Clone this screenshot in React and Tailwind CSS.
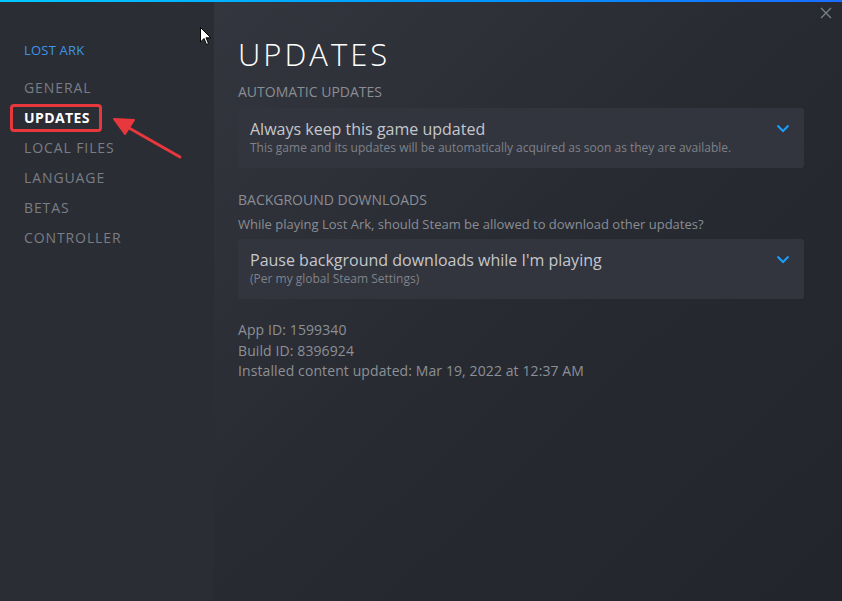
import React from "react";

const font = { fontFamily: '"Open Sans", "Noto Sans", Arial, sans-serif' };

function Chevron() {
  return (
    <svg width="14" height="9" viewBox="0 0 14 9" className="shrink-0">
      <path d="M1.5 1.5 L7 7 L12.5 1.5" fill="none" stroke="#1a9fff" strokeWidth="2" />
    </svg>
  );
}

function Dropdown({ title, sub }) {
  return (
    <div className="flex items-start justify-between rounded-[3px] bg-[#32353d] pl-3 pr-[14px] h-[60px] pt-[12px]">
      <div className="flex flex-col">
        <div className="text-[16px] leading-[19px] text-[#c5c7cc]">{title}</div>
        <div className="mt-[1px] text-[12px] leading-[15px] text-[#7f828a]">{sub}</div>
      </div>
      <div className="pt-[4px]">
        <Chevron />
      </div>
    </div>
  );
}

export default function App() {
  const nav = ["GENERAL", "UPDATES", "LOCAL FILES", "LANGUAGE", "BETAS", "CONTROLLER"];
  return (
    <div className="relative w-[842px] h-[601px] overflow-hidden bg-[#2a2d34]" style={font}>
      <div className="absolute left-0 top-0 w-full h-[2px] bg-gradient-to-r from-[#00c8ff] to-[#1a6cff]" />
      <div className="flex h-full">
        <div className="w-[214px] shrink-0 bg-[#2a2d34] pl-6 pt-[41px]">
          <div className="text-[13px] leading-[18px] text-[#3e95e8] tracking-[0.2px]">LOST ARK</div>
          <div className="mt-[14px] flex flex-col">
            {nav.map((n) => (
              <div
                key={n}
                className={
                  "h-[30px] leading-[30px] text-[14px] " +
                  (n === "UPDATES" ? "text-white font-bold tracking-[0.4px]" : "text-[#7a7d84] tracking-[0.9px]")
                }
              >
                {n}
              </div>
            ))}
          </div>
        </div>
        <div className="flex-1 bg-gradient-to-br from-[#33363e] via-[#272a31] to-[#22252c] pl-6 pr-[38px] pt-[34px]">
          <div className="text-[31px] leading-[40px] text-white font-light tracking-[3px]">UPDATES</div>
          <div className="mt-[9px] text-[14px] leading-[18px] text-[#8a8d94]">AUTOMATIC UPDATES</div>
          <div className="mt-[7px]">
            <Dropdown
              title="Always keep this game updated"
              sub="This game and its updates will be automatically acquired as soon as they are available."
            />
          </div>
          <div className="mt-[23px] text-[14px] leading-[18px] text-[#8a8d94]">BACKGROUND DOWNLOADS</div>
          <div className="mt-[6px] text-[13px] leading-[18px] text-[#8a8d94]">
            While playing Lost Ark, should Steam be allowed to download other updates?
          </div>
          <div className="mt-[6px]">
            <Dropdown title="Pause background downloads while I'm playing" sub="(Per my global Steam Settings)" />
          </div>
          <div className="mt-[21px] flex flex-col text-[14px] leading-[20.5px] text-[#8d9096] tracking-[0.1px]">
            <div>App ID: 1599340</div>
            <div>Build ID: 8396924</div>
            <div>Installed content updated: Mar 19, 2022 at 12:37 AM</div>
          </div>
        </div>
      </div>

      {/* close */}
      <svg className="absolute left-[820px] top-[7px]" width="12" height="12" viewBox="0 0 12 12">
        <path d="M1 1 L11 11 M11 1 L1 11" stroke="#7c8088" strokeWidth="1.3" />
      </svg>

      {/* annotation box */}
      <div className="absolute left-[10px] top-[104px] w-[92px] h-[28px] rounded-[4px] border-[3px] border-[#e8383d]" />

      {/* arrow */}
      <svg className="absolute left-[108px] top-[112px]" width="80" height="52" viewBox="0 0 80 52">
        <path d="M72 45 L14 12" stroke="#e8383d" strokeWidth="3" strokeLinecap="round" />
        <path d="M6 7 L26 8 L17 22 Z" fill="#e8383d" stroke="#e8383d" strokeWidth="2" strokeLinejoin="round" />
      </svg>

      {/* cursor */}
      <svg className="absolute left-[200px] top-[27px]" width="12" height="19" viewBox="0 0 12 19">
        <path d="M0.5 0.5 L0.5 15 L4 11.5 L6.5 17.5 L8.5 16.5 L6 10.8 L10.8 10.8 Z" fill="#ffffff" stroke="#000000" strokeWidth="1" />
      </svg>
    </div>
  );
}
